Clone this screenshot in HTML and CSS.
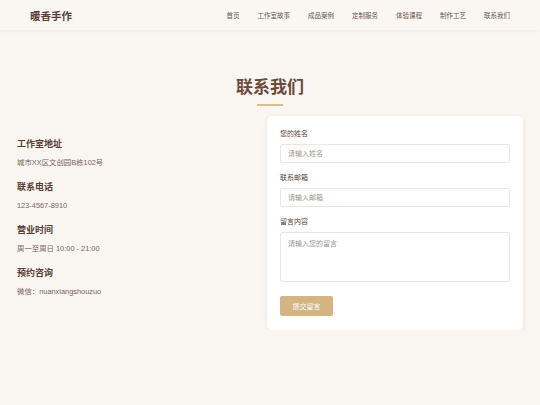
FILE: index.html
```html
<!DOCTYPE html>
<html lang="zh">
<head>
<meta charset="utf-8">
<title>暖香手作 - 联系我们</title>
<link rel="stylesheet" href="styles.css">
</head>
<body>
<header class="header">
  <div class="logo">暖香手作</div>
  <nav class="nav">
    <a href="#">首页</a>
    <a href="#">工作室故事</a>
    <a href="#">成品案例</a>
    <a href="#">定制服务</a>
    <a href="#">体验课程</a>
    <a href="#">制作工艺</a>
    <a href="#">联系我们</a>
  </nav>
</header>
<main class="main">
  <h1 class="title">联系我们</h1>
  <div class="underline"></div>
  <div class="content">
    <div class="info">
      <div class="item">
        <h3>工作室地址</h3>
        <p>城市XX区文创园B栋102号</p>
      </div>
      <div class="item">
        <h3>联系电话</h3>
        <p>123-4567-8910</p>
      </div>
      <div class="item">
        <h3>营业时间</h3>
        <p>周一至周日 10:00 - 21:00</p>
      </div>
      <div class="item">
        <h3>预约咨询</h3>
        <p>微信：nuanxiangshouzuo</p>
      </div>
    </div>
    <form class="card">
      <label class="label">您的姓名</label>
      <input class="input" type="text" placeholder="请输入姓名">
      <label class="label">联系邮箱</label>
      <input class="input" type="text" placeholder="请输入邮箱">
      <label class="label">留言内容</label>
      <textarea class="input textarea" placeholder="请输入您的留言"></textarea>
      <button class="btn" type="button">提交留言</button>
    </form>
  </div>
</main>
</body>
</html>
```
FILE: styles.css
```css
* { box-sizing: border-box; }
body {
  margin: 0;
  background: #f9f6f2;
  font-family: "Liberation Sans", "Noto Sans CJK SC", sans-serif;
  color: #5a4438;
}
.header {
  height: 30px;
  padding: 0 30px;
  display: flex;
  align-items: center;
  justify-content: space-between;
  background: #faf7f3;
  box-shadow: 0 1px 3px rgba(120, 90, 60, 0.08);
}
.logo {
  font-size: 10.5px;
  font-weight: 700;
  color: #5a3e33;
}
.nav {
  display: flex;
  gap: 18px;
}
.nav a {
  font-size: 6.5px;
  color: #6b5448;
  text-decoration: none;
}
.main {
  padding: 45px 17px 0;
}
.title {
  margin: 0;
  text-align: center;
  font-size: 17px;
  line-height: 26px;
  font-weight: 700;
  color: #6b4a3a;
}
.underline {
  width: 26px;
  height: 2px;
  margin: 3px auto 0;
  background: #d9bd8f;
}
.content {
  margin-top: 10px;
  display: grid;
  grid-template-columns: 1fr 256px;
  gap: 14px;
}
.info {
  padding-top: 22px;
}
.item {
  margin-bottom: 13px;
}
.item h3 {
  margin: 0;
  font-size: 9px;
  line-height: 13px;
  font-weight: 700;
  color: #5a3e33;
}
.item p {
  margin: 6px 0 0;
  font-size: 7.4px;
  line-height: 11px;
  color: #7a6458;
}
.card {
  background: #fff;
  border-radius: 5px;
  box-shadow: 0 1px 5px rgba(110, 80, 50, 0.12);
  padding: 13px 13px 14px;
  display: flex;
  flex-direction: column;
  align-items: flex-start;
}
.label {
  font-size: 7px;
  line-height: 10px;
  color: #5a4438;
  margin-bottom: 5px;
}
.input {
  width: 100%;
  height: 19px;
  border: 1px solid #ebe6e1;
  border-radius: 2px;
  padding: 0 7px;
  font-family: inherit;
  font-size: 7px;
  color: #5a4438;
  outline: none;
  margin-bottom: 10px;
  background: #fff;
}
.input::placeholder {
  color: #9a9590;
}
.textarea {
  height: 50px;
  padding-top: 6px;
  resize: none;
  margin-bottom: 14px;
  line-height: 10px;
}
.btn {
  width: 53px;
  height: 20px;
  border: none;
  border-radius: 2px;
  background: #d4b483;
  color: #fff;
  font-family: inherit;
  font-size: 7px;
  padding: 0;
}
```
